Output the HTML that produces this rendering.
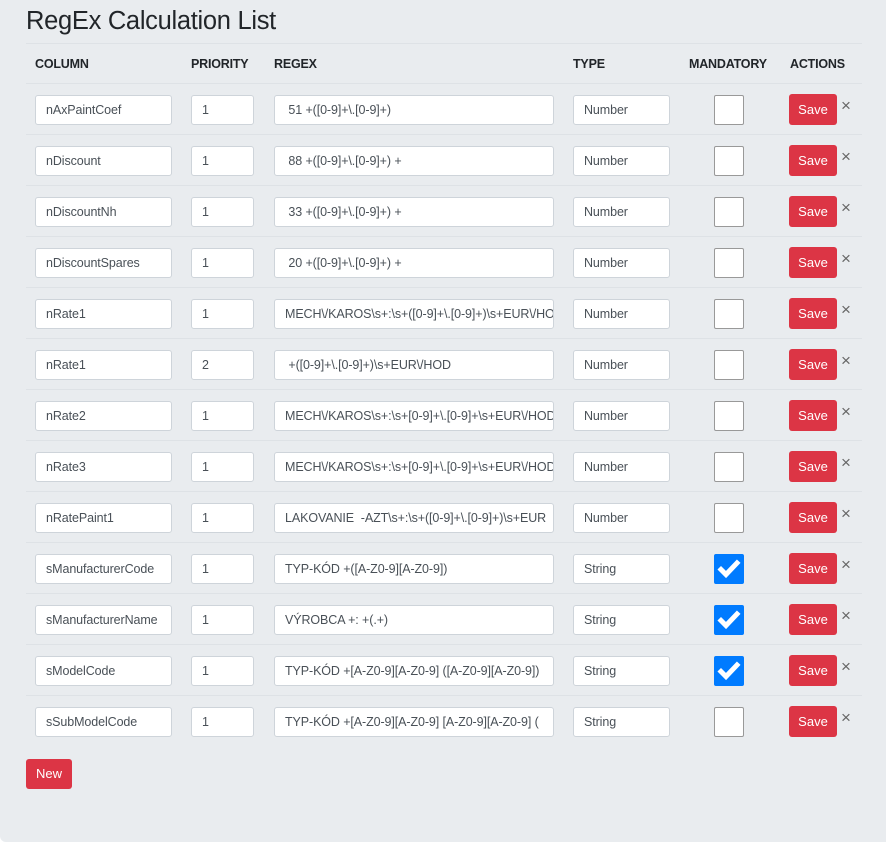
<!DOCTYPE html>
<html><head><meta charset="utf-8"><style>
*{box-sizing:border-box;margin:0;padding:0}
body{width:886px;height:842px;background:#fff;font-family:"Liberation Sans",sans-serif;overflow:hidden;position:relative}
.bg{position:absolute;left:0;top:0;width:886px;height:842px;background:#e9ecef;border-radius:0 0 0 6px}
h1{position:absolute;left:26px;top:7px;font-size:25.5px;font-weight:400;color:#212529;letter-spacing:-0.3px}
.hl{position:absolute;left:26px;width:836px;height:1px;background:#dee2e6}
.th{position:absolute;top:57px;font-size:12.5px;font-weight:700;color:#212529;letter-spacing:-0.2px}
.inp{position:absolute;height:30px;background:#fff;border:1px solid #ced4da;border-radius:3px;font-size:12.5px;color:#495057;padding:0 10px;line-height:28px;white-space:nowrap;overflow:hidden;letter-spacing:-0.1px}
.cb{position:absolute;left:714px;width:30px;height:30px;background:#fff;border:1px solid #999;border-radius:2px}
.cb.on{background:#007bff;border-color:#007bff}
.save{position:absolute;left:789px;width:48px;height:31px;background:#dc3545;color:#fff;border-radius:3px;font-size:13px;text-align:center;line-height:31px}
.x{position:absolute;left:840px;font-size:17px;color:#666;width:12px;text-align:center}
.new{position:absolute;left:26px;top:759px;width:46px;height:30px;background:#dc3545;color:#fff;border-radius:3px;font-size:13px;text-align:center;line-height:30px}
</style></head><body>
<div class="bg"></div>
<h1>RegEx Calculation List</h1>
<div class="hl" style="top:43px"></div>
<div class="th" style="left:35px">COLUMN</div>
<div class="th" style="left:191px">PRIORITY</div>
<div class="th" style="left:274px">REGEX</div>
<div class="th" style="left:573px">TYPE</div>
<div class="th" style="left:689px">MANDATORY</div>
<div class="th" style="left:790px">ACTIONS</div>
<div id="rows"></div>
<div class="new">New</div>
<script>
var d=[["nAxPaintCoef","1","&nbsp;51 +([0-9]+\\.[0-9]+)","Number",0],
["nDiscount","1","&nbsp;88 +([0-9]+\\.[0-9]+) +","Number",0],
["nDiscountNh","1","&nbsp;33 +([0-9]+\\.[0-9]+) +","Number",0],
["nDiscountSpares","1","&nbsp;20 +([0-9]+\\.[0-9]+) +","Number",0],
["nRate1","1","MECH\\/KAROS\\s+:\\s+([0-9]+\\.[0-9]+)\\s+EUR\\/HOD","Number",0],
["nRate1","2","&nbsp;+([0-9]+\\.[0-9]+)\\s+EUR\\/HOD","Number",0],
["nRate2","1","MECH\\/KAROS\\s+:\\s+[0-9]+\\.[0-9]+\\s+EUR\\/HOD","Number",0],
["nRate3","1","MECH\\/KAROS\\s+:\\s+[0-9]+\\.[0-9]+\\s+EUR\\/HOD","Number",0],
["nRatePaint1","1","LAKOVANIE &nbsp;-AZT\\s+:\\s+([0-9]+\\.[0-9]+)\\s+EUR","Number",0],
["sManufacturerCode","1","TYP-KÓD +([A-Z0-9][A-Z0-9])","String",1],
["sManufacturerName","1","VÝROBCA +: +(.+)","String",1],
["sModelCode","1","TYP-KÓD +[A-Z0-9][A-Z0-9] ([A-Z0-9][A-Z0-9])","String",1],
["sSubModelCode","1","TYP-KÓD +[A-Z0-9][A-Z0-9] [A-Z0-9][A-Z0-9] (","String",0]];
var h="";
d.forEach(function(r,i){var t=83+i*51;
h+='<div class="hl" style="top:'+t+'px"></div>';
var y=t+12;
h+='<div class="inp" style="left:35px;top:'+y+'px;width:137px">'+r[0]+'</div>';
h+='<div class="inp" style="left:191px;top:'+y+'px;width:63px">'+r[1]+'</div>';
h+='<div class="inp" style="left:274px;top:'+y+'px;width:280px">'+r[2]+'</div>';
h+='<div class="inp" style="left:573px;top:'+y+'px;width:97px">'+r[3]+'</div>';
h+='<div class="cb'+(r[4]?' on':'')+'" style="top:'+y+'px">'+(r[4]?'<svg width="28" height="28" viewBox="0 0 28 28"><path d="M6 14.5l5 5L22 8" stroke="#fff" stroke-width="5" fill="none" stroke-linecap="square"/></svg>':'')+'</div>';
h+='<div class="save" style="top:'+(y-1)+'px">Save</div>';
h+='<div class="x" style="top:'+(y+1)+'px">×</div>';
});
document.getElementById("rows").innerHTML=h;
</script>
</body></html>
